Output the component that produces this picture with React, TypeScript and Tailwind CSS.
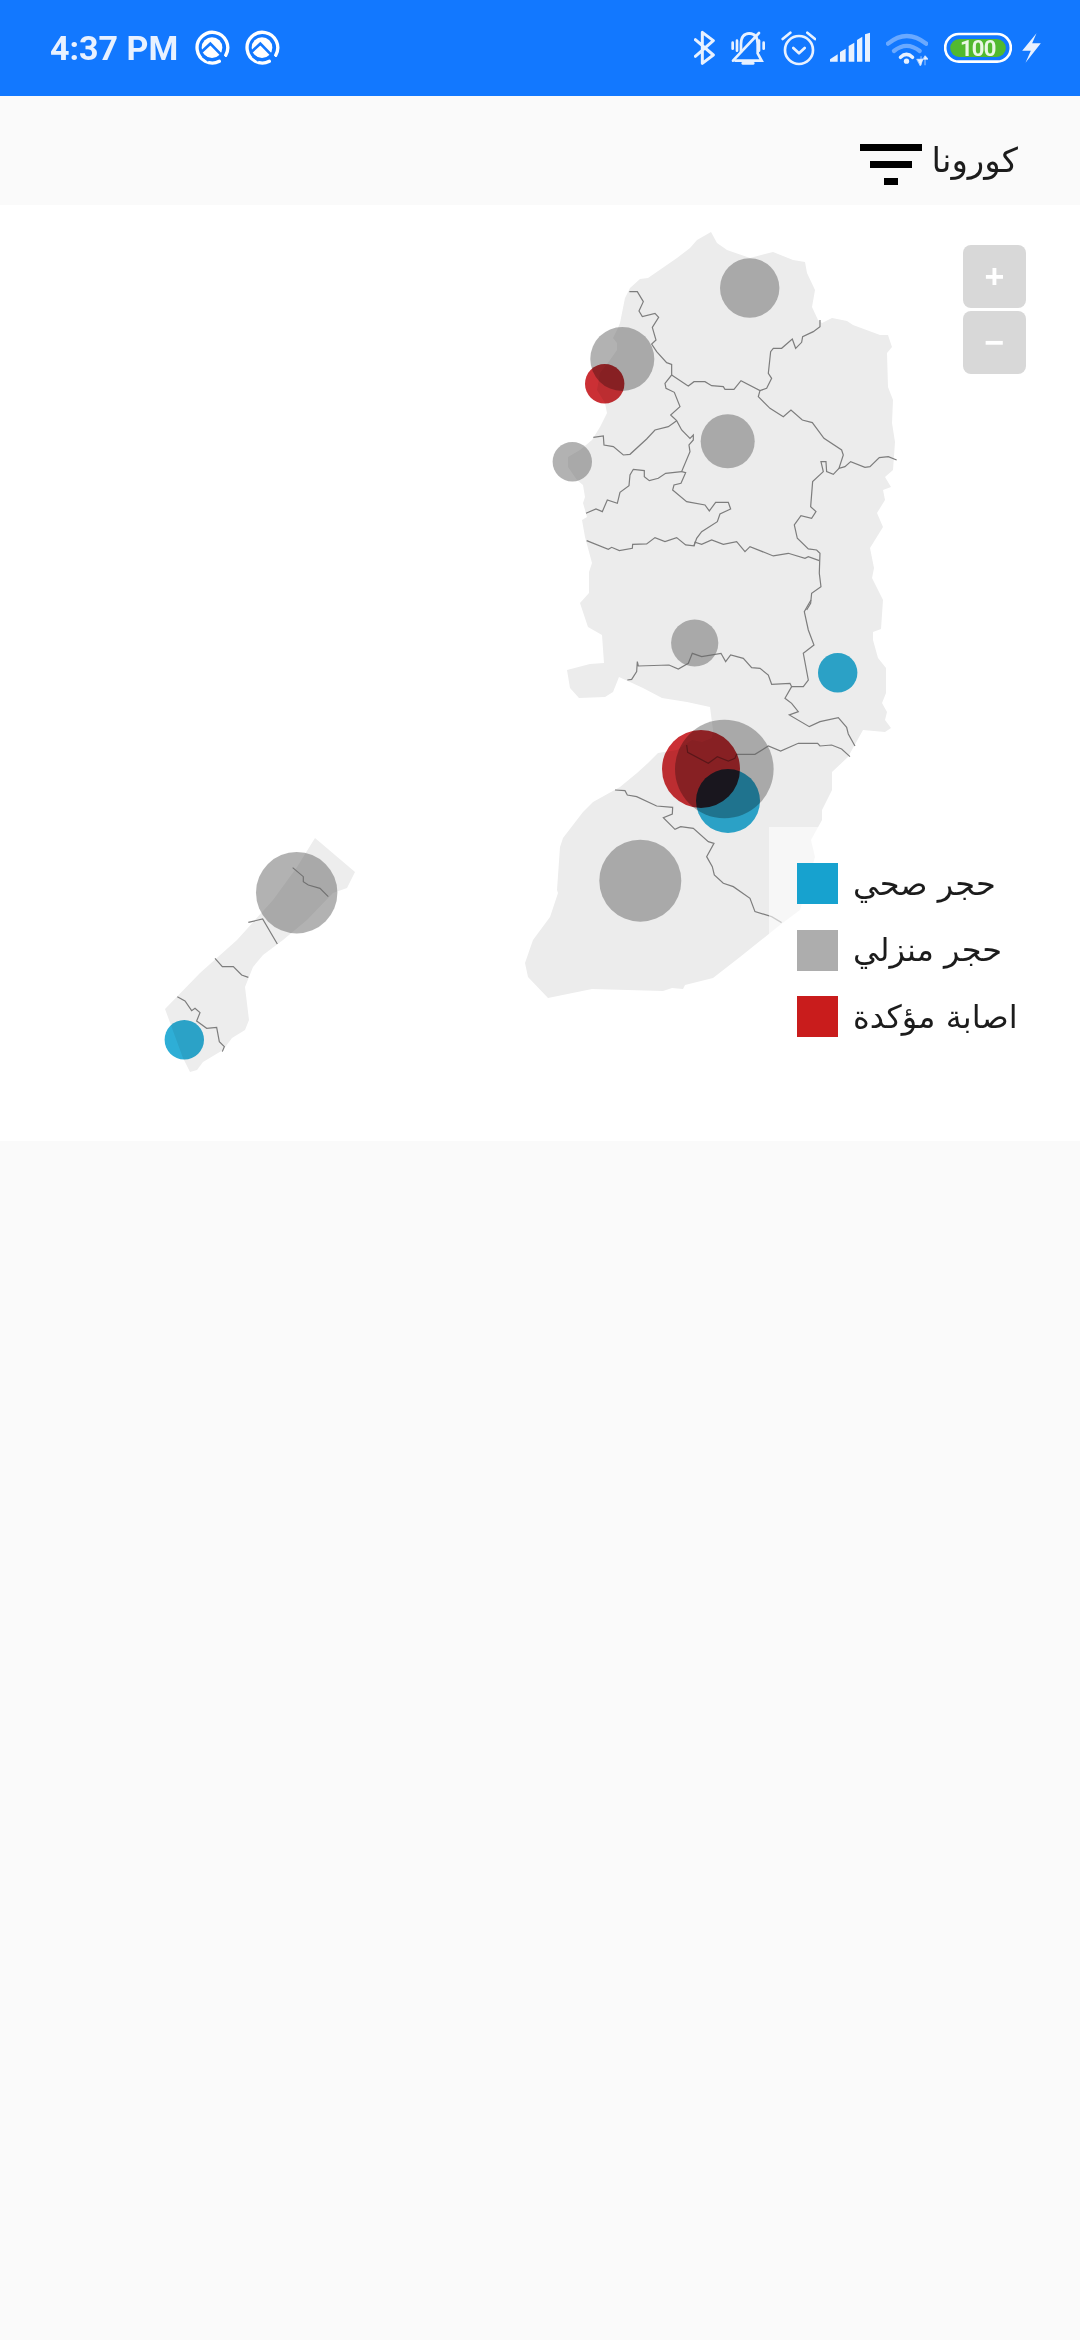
const WEST_BANK =
  "711,232 697,240 690,248 677,258 648,278 640,279 630,288 625,298 620,323 617,330 613,338 617,343 617,350 610,360 600,373 597,390 605,403 607,413 600,427 592,440 580,450 568,457 568,467 577,480 583,485 585,497 583,503 587,517 582,520 585,537 592,563 589,572 589,593 580,603 588,627 602,635 604,663 590,664 567,670 570,688 579,698 605,697 613,692 619,677 643,688 662,698 687,702 710,707 713,730 712,738 702,742 692,740 677,750 658,753 648,763 637,773 620,787 593,802 583,812 563,838 560,847 557,890 558,893 550,917 533,940 525,963 528,977 548,998 592,989 663,991 672,988 683,989 685,985 713,978 740,957 780,925 800,910 815,857 811,840 822,820 822,810 832,790 832,772 848,757 863,730 885,732 891,728 885,720 887,712 882,703 886,693 886,668 878,658 873,640 873,632 881,629 883,600 872,578 874,568 870,548 883,527 877,513 885,500 883,490 891,487 885,477 893,470 895,442 892,423 893,400 888,387 887,353 892,347 888,335 880,335 853,325 847,321 832,318 822,323 818,320 812,307 815,290 807,273 805,262 793,260 773,252 750,258 727,250 717,243"

const GAZA =
  "315,838 355,872 347,888 333,893 307,920 283,940 263,955 253,967 245,987 249,1020 245,1030 232,1038 223,1050 203,1062 197,1070 190,1072 183,1058 165,1009 200,973 237,940 273,900 297,867"

// border lines, in the coordinates of the crop they were traced from
const NORTH_BORDERS = [
  "328,245 352,245 370,275 357,303 367,320 405,310 416,322 397,352 408,390 395,402 410,425 440,458 455,463 455,495 435,520 438,535 463,547 480,590 452,615 470,632 485,660 510,685 520,675 520,690 507,705 510,725 485,785 497,788 483,820 462,825 458,840 500,875 555,885 568,903 587,877 625,877 632,897 600,912 592,935 545,965 530,985 522,1008",
  "455,495 500,525 505,528 522,515 555,515 575,527 610,530 615,538 642,538 663,512 720,542 740,535 755,505 745,490 752,425 760,415 785,415 817,387 827,415 845,397 848,380 880,365 900,350 900,330",
  "720,542 715,560 750,595 790,620 813,600 847,630 877,638 912,685 965,720 970,735 957,775 975,770 992,755 1035,772 1050,770 1078,743 1105,740 1130,750",
  "957,775 940,793 920,785 918,755 903,755 910,785 878,815 872,890 888,905 875,925 843,917 823,945 832,985 865,1017 890,1020 900,1030 898,1090 903,1130 875,1150 872,1180 860,1200",
  "220,682 250,678 252,705 280,710 310,735 330,733 380,687 405,660 445,650 470,632",
  "198,910 228,897 247,905 262,870 292,880 300,847 327,827 330,795 340,778 373,782 373,800 388,812 415,805 437,790 485,785",
  "200,992 265,1018 275,1012 298,1022 337,1015 338,1003 380,1002 405,983 435,995 470,983 497,1005 522,1008 525,997 545,1003 575,990 610,1003 650,995 675,1025 690,1010 760,1038 805,1030 855,1045 865,1040 898,1052",
]

const SOUTH_BORDERS = [
  "873,0 853,35 865,90 882,135 850,160 865,240 850,260 815,260 810,250 755,253 745,225 720,205 695,203 670,175 632,165 617,185 603,160 545,170 517,160 505,190 475,207 447,195 355,198 352,185 350,215 335,238 322,240",
  "815,260 795,295 815,310 835,335 808,345 868,380 900,365 955,353 980,382 985,402 1005,438",
  "500,435 503,457 565,490 592,470 625,483 645,475 650,463 705,463 745,438 782,453 835,430 893,430 900,438 935,435 965,447 990,470",
  "285,570 315,572 322,585 350,590 410,618 458,622 457,642 430,653 465,688 482,680 520,685 565,725 582,730 560,770 577,800 583,825 610,850 640,860 690,895 705,935 755,950 785,968",
]

const GAZA_BORDERS = [
  "458,143 490,170 490,185 505,195 540,205 565,230",
  "325,307 368,297 412,372",
  "225,415 247,440 280,440 305,465 325,472",
  "112,530 135,543 155,572 165,565 180,578 170,603 200,625 230,622 238,665 253,680 247,695",
]

const GRAY = [
  [749.7, 288, 29.7],
  [622.3, 359, 32],
  [727.7, 441.3, 27],
  [572.3, 461.7, 19.7],
  [694.7, 643, 23.6],
  [724.3, 769, 49.3],
  [640.3, 880.7, 41],
  [296.7, 892.7, 40.7],
]

const RED = [
  [604.7, 383.7, 19.7],
  [701, 769, 39],
]

const BLUE = [
  [837.7, 672.7, 19.7],
  [728, 801, 32],
  [184.3, 1039.7, 19.7],
]

const LEGEND = [
  { label: "حجر صحي", color: "bg-[#17a2cf]" },
  { label: "حجر منزلي", color: "bg-[#adadad]" },
  { label: "اصابة مؤكدة", color: "bg-[#c91c1c]" },
]

const ICON = "#e8f1ff"

function QIcon() {
  return (
    <svg width={36} height={48} viewBox="585 72 108 144" fill="none">
      <path d="M680 166A46 46 0 1 0 661 184" stroke="#fff" strokeWidth={10} strokeLinecap="round" />
      <circle cx={639} cy={143} r={31} fill="#fff" />
      <path d="M608 155L634 131L678 176" stroke="#1278ff" strokeWidth={8} />
      <path d="M612 168L630 181" stroke="#1278ff" strokeWidth={10} />
    </svg>
  )
}

function StatusIcons() {
  return (
    <div className="flex items-center">
      <svg width={21} height={48} viewBox="103 72 63 144" fill="none" stroke={ICON} strokeWidth={9} strokeLinejoin="round" strokeLinecap="round">
        <path d="M107 119L161 165L128 190V97L161 122L107 169" />
      </svg>
      <svg className="ml-[16px]" width={34} height={48} viewBox="213 72 102 144" fill="none" stroke={ICON} strokeWidth={8} strokeLinecap="round">
        <path d="M243 155V132Q243 101 268 100Q293 101 293 132V160L305 182H226" />
        <path d="M297 99L219 182" />
        <path d="M218 128V146M231 122V152M297 122V152M311 128V146M248 190H280" />
      </svg>
      <svg className="ml-[16px]" width={35} height={48} viewBox="363 72 105 144" fill="none" stroke={ICON} strokeWidth={8} strokeLinecap="round" strokeLinejoin="round">
        <circle cx={417} cy={150} r={42} />
        <path d="M368 117L391 98M442 98L465 117M400 144L417 160L434 144" />
      </svg>
      <svg className="ml-[14px]" width={40} height={48} viewBox="510 72 120 144" fill={ICON}>
        <path d="M510 185V178L533 163V185Z" />
        <path d="M540 185V156L557 146V185Z" />
        <path d="M566 185V138L583 128V185Z" />
        <path d="M591 185V120L607 110V185Z" />
        <path d="M615 185V103L630 98V185Z" />
      </svg>
      <svg className="ml-[16px]" width={42} height={48} viewBox="678 72 127 144" fill="none" strokeLinecap="round">
        <path d="M684 131Q740 84 800 131" stroke="#6aa9ff" strokeWidth={13} />
        <path d="M702 153Q740 122 780 153" stroke="#6aa9ff" strokeWidth={13} />
        <path d="M722 172Q740 155 758 172" stroke={ICON} strokeWidth={11} />
        <circle cx={740} cy={184} r={8} fill={ICON} />
        <path d="M772 178H790L782 197ZM784 170V195M796 170V195M790 178H806L797 168Z" fill={ICON} stroke={ICON} strokeWidth={2} />
      </svg>
      <svg className="ml-[16px]" width={68} height={48} viewBox="852 72 203 144" fill="none">
        <rect x={855} y={102} width={197} height={83} rx={41} stroke="#fff" strokeWidth={8} />
        <rect x={870} y={117} width={167} height={54} rx={27} fill="#52b92f" />
        <text x={953} y={169} textAnchor="middle" fill="#eaf7e4" fontFamily="Roboto, sans-serif" fontWeight={700} fontSize={66} letterSpacing={-2}>
          100
        </text>
      </svg>
      <svg className="ml-[10px]" width={19} height={48} viewBox="1087 72 56 144" fill={ICON}>
        <path d="M1130 100L1087 152H1113L1097 188L1143 130H1117Z" />
      </svg>
    </div>
  )
}

function MapDrawing() {
  return (
    <svg className="block" width={1080} height={936} viewBox="0 205 1080 936">
      <polygon points={WEST_BANK} fill="#ececec" />
      <polygon points={GAZA} fill="#ededed" />
      <g transform="translate(520 210) scale(0.3333)" fill="none" stroke="#7d7d7d" strokeWidth={3.6}>
        {NORTH_BORDERS.map((p) => (
          <polyline key={p} points={p} />
        ))}
      </g>
      <g transform="translate(520 600) scale(0.3333)" fill="none" stroke="#7d7d7d" strokeWidth={3.6}>
        {SOUTH_BORDERS.map((p) => (
          <polyline key={p} points={p} />
        ))}
      </g>
      <g transform="translate(140 820) scale(0.3333)" fill="none" stroke="#7d7d7d" strokeWidth={3.6}>
        {GAZA_BORDERS.map((p) => (
          <polyline key={p} points={p} />
        ))}
      </g>
      {GRAY.map(([x, y, r]) => (
        <circle key={x} cx={x} cy={y} r={r} fill="#666666" fillOpacity={0.5} />
      ))}
      {RED.map(([x, y, r]) => (
        <circle key={x} className="mix-blend-multiply" cx={x} cy={y} r={r} fill="#cb3035" />
      ))}
      {BLUE.map(([x, y, r]) => (
        <circle key={x} className="mix-blend-multiply" cx={x} cy={y} r={r} fill="#2eaed6" />
      ))}
    </svg>
  )
}

export default function App() {
  return (
    <div className="min-h-[2340px] bg-[#fafafa] font-['DejaVu_Sans',sans-serif]">
      <div className="h-24 bg-[#1278ff] flex items-center justify-between pl-[50px] pr-[39px]">
        <div className="flex items-center">
          <span className="font-['Roboto',sans-serif] font-bold text-[34px] text-[#e8f1ff] leading-none">4:37 PM</span>
          <div className="flex ml-[16px] gap-[14px]">
            <QIcon />
            <QIcon />
          </div>
        </div>
        <StatusIcons />
      </div>

      <div className="h-[109px] pt-[18px] flex items-center justify-end pr-[62px] gap-[10px]">
        <div className="mt-[10px] flex flex-col items-center gap-[10px] w-[62px]">
          <div className="h-[7px] w-[62px] bg-black" />
          <div className="h-[7px] w-[42px] bg-black" />
          <div className="h-[7px] w-[14px] bg-black" />
        </div>
        <span className="text-[34px] text-[#1c1c1c] leading-none">كورونا</span>
      </div>

      <div className="relative h-[936px] bg-white overflow-hidden">
        <MapDrawing />

        <div className="absolute top-[40px] right-[54px] flex flex-col gap-[3px]">
          <div className="w-[63px] h-[63px] rounded-lg bg-[#d8d8d8] flex items-center justify-center text-white text-[34px] font-bold font-['Liberation_Sans',sans-serif]">+</div>
          <div className="w-[63px] h-[63px] rounded-lg bg-[#d8d8d8] flex items-center justify-center text-white text-[34px] font-bold font-['Liberation_Sans',sans-serif]">−</div>
        </div>

        <div className="absolute left-[769px] top-[622px] bg-white/60 pl-[28px] pr-[30px] py-[36px] flex flex-col gap-[25.5px]">
          {LEGEND.map((item) => (
            <div key={item.label} className="flex items-center gap-[15px] h-[41px]">
              <div className={`w-[41px] h-[41px] ${item.color}`} />
              <span className="text-[32px] text-[#1c1c1c] leading-none whitespace-nowrap">{item.label}</span>
            </div>
          ))}
        </div>
      </div>
    </div>
  )
}
